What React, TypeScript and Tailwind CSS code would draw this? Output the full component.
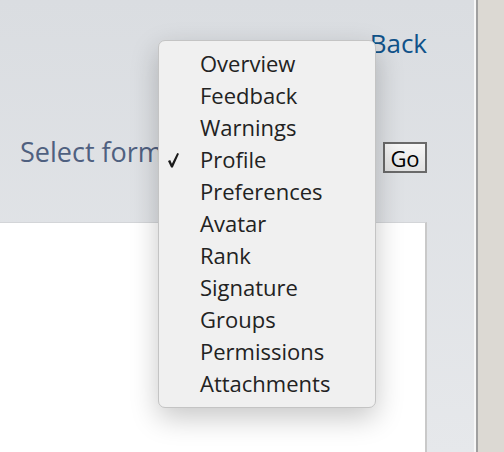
const items = [
    "Overview",
    "Feedback",
    "Warnings",
    "Profile",
    "Preferences",
    "Avatar",
    "Rank",
    "Signature",
    "Groups",
    "Permissions",
    "Attachments",
];

function Check() {
    return (
        <svg width="12" height="15" viewBox="0 0 12 15" className="absolute left-[9px] top-[10px]">
            <path d="M0 8 L2.2 7.1 L3.9 10.8 L9.2 0 L11 0.8 L4.8 14.4 L3.1 14.4 Z" fill="#1a1a1a" />
        </svg>
    );
}

export default function App() {
    return (
        <div className="relative flex h-[452px] w-[504px] overflow-hidden font-['Open_Sans',sans-serif]">
            <div className="flex w-[474px] flex-col bg-gradient-to-b from-[#dadde1] to-[#e6e8eb] pr-[47px]">
                <div className="flex h-[62px] items-start justify-end pt-[24px]">
                    <a className="text-[26px] leading-[38px] text-[#105289]">Back</a>
                </div>

                <div className="mt-[70px] flex h-[41px] items-start justify-between">
                    <span className="pl-[20px] text-[27px] leading-[40px] text-[#4f6080]">Select form</span>
                    <button className="mt-[10px] h-[31px] w-[44px] border-2 border-[#6a6a6a] bg-gradient-to-b from-[#f7f7f7] to-[#e2e2e2] text-[22px] leading-[26px] text-black">
                        Go
                    </button>
                </div>

                <div className="mt-[49px] flex-1 border-t border-r-2 border-t-[#d3d5d8] border-r-[#c9c9c9] bg-white" />
            </div>
            <div className="w-[2px] bg-[#f7f7f7]" />
            <div className="w-[2px] bg-[#a0a0a0]" />
            <div className="flex-1 bg-[#dcd9d3]" />

            <div className="absolute left-[158px] top-[40px] w-[218px] rounded-[7px] border border-[#c4c4c4] bg-[#f0f0f0] pt-[6px] pb-[8px] shadow-[0_10px_28px_rgba(0,0,0,0.22)]">
                {items.map((item) => (
                    <div key={item} className="relative flex h-[32px] items-center pl-[41px] text-[22px] leading-[32px] text-[#222222]">
                        {item === "Profile" && <Check />}
                        {item}
                    </div>
                ))}
            </div>
        </div>
    );
}
